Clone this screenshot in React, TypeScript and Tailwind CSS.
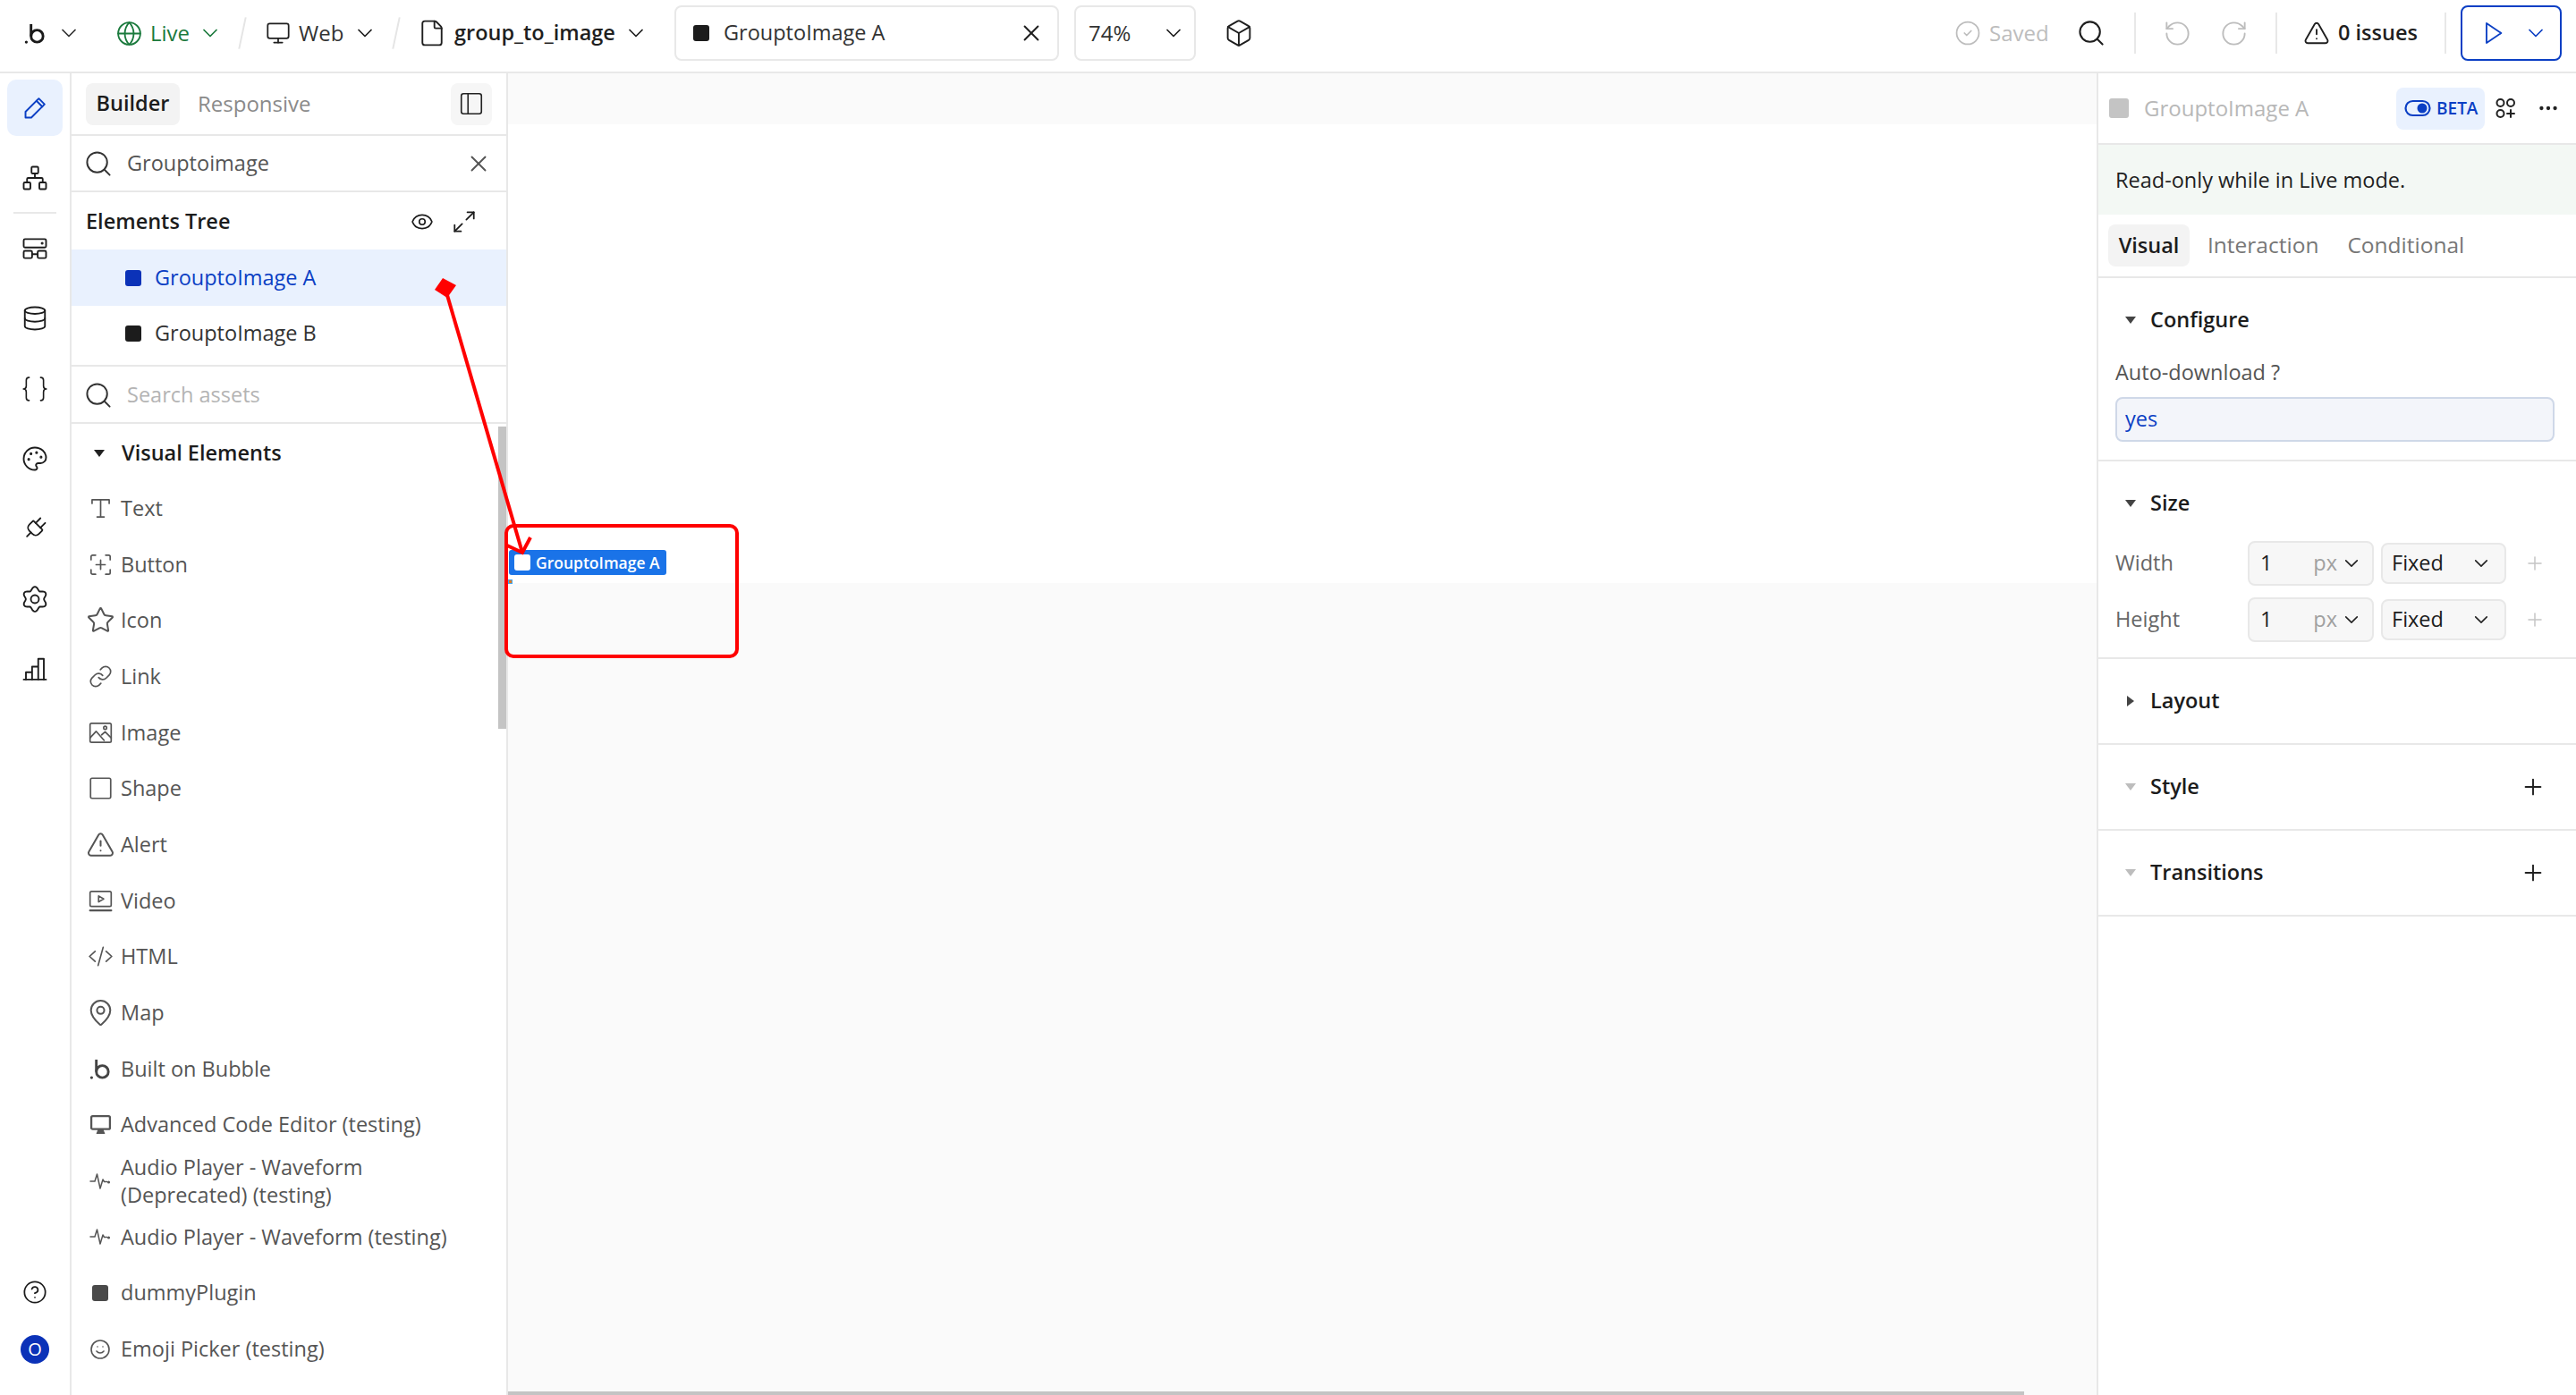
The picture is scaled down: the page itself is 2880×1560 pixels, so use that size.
import React from "react";
import { ChevronDown, Globe, Monitor, File, X, Box, Search, CircleCheck, RotateCcw, RotateCw, TriangleAlert, Eye, Maximize2, Plus, Network, Database, Palette, Plug, CircleHelp, Star, Link, MapPin, Smile, Ellipsis, PanelLeft } from "lucide-react";

type SP = { className?: string; strokeWidth?: number };
const S = (p: React.SVGProps<SVGSVGElement>) => (
  <svg viewBox="0 0 24 24" fill="none" stroke="currentColor" strokeWidth={1.5} strokeLinecap="round" strokeLinejoin="round" {...p} />
);

const BubbleLogo = ({ className }: SP) => (
  <svg viewBox="0 0 26 26" className={className} fill="none" stroke="currentColor">
    <circle cx="15" cy="16" r="7" strokeWidth="3" />
    <path d="M8 2v14" strokeWidth="3" />
    <circle cx="2.500" cy="23" r="1.700" fill="currentColor" stroke="none" />
  </svg>
);
const PencilI = ({ className }: SP) => (
  <S className={className}><path d="M3.500 20.500v-5L15 4l5 5L8.500 20.500z" /><path d="M13 6l5 5" /></S>
);
const LayoutI = ({ className }: SP) => (
  <S className={className}><rect x="2" y="3.500" width="20" height="7.500" rx="1.200" /><rect x="2" y="14" width="7.500" height="6.500" rx="1.200" /><rect x="14.500" y="14" width="7.500" height="6.500" rx="1.200" /><path d="M9.500 17h5" /><circle cx="18.500" cy="7.200" r=".5" fill="currentColor" /></S>
);
const flower = Array.from({ length: 73 }, (_, i) => {
  const t = (i / 72) * Math.PI * 2;
  const r = 9.6 + 1.5 * Math.cos(6 * t);
  return `${i ? "L" : "M"}${(12 + r * Math.sin(t)).toFixed(2)} ${(12 - r * Math.cos(t)).toFixed(2)}`;
}).join("");
const GearI = ({ className }: SP) => (
  <S className={className}><circle cx="12" cy="12" r="3.600" /><path d={flower} /></S>
);
const ChartI = ({ className }: SP) => (
  <S className={className}><path d="M2 21.500h20" /><path d="M4 21.500v-6.500h5.500v6.500M9.500 21.500V10h5.500v11.500M15 21.500V3h5v18.500" /></S>
);
const BracesI = ({ className }: SP) => (
  <S className={className} viewBox="0 0 28 28"><path d="M8 2C5.500 2 5 3 5 5v6c0 2-1 3-3 3 2 0 3 1 3 3v6c0 2 .5 3 3 3" /><path d="M20 2c2.500 0 3 1 3 3v6c0 2 1 3 3 3-2 0-3 1-3 3v6c0 2-.5 3-3 3" /></S>
);
const PlugI = ({ className, strokeWidth }: SP) => <Plug className={`${className} rotate-45`} strokeWidth={strokeWidth} />;
const ButtonI = ({ className }: SP) => (
  <S className={className}><path d="M2.500 7V4c0-.8.7-1.500 1.500-1.500h3M17 2.500h3c.8 0 1.500.7 1.500 1.500v3M21.500 17v3c0 .8-.7 1.500-1.500 1.500h-3M7 21.500H4c-.8 0-1.500-.7-1.500-1.500v-3M12 7.500v9M7.500 12h9" /></S>
);
const WaveI = ({ className }: SP) => (
  <S className={className}><path d="M1 12h5l2.500-8 3.500 16 3-10 1.500 2.500h3" /><circle cx="21.500" cy="13" r=".8" fill="currentColor" /></S>
);
const TextI = ({ className }: SP) => (
  <S className={className}><path d="M3.500 7V3.500h17V7M12 3.500v17M8.500 20.500h7" /></S>
);
const ImageI = ({ className }: SP) => (
  <S className={className}><rect x="1.500" y="2.500" width="21" height="19" rx="1.500" /><path d="M1.500 17l6-6.500 8 9M13 14l3.500-3 6 6" /><circle cx="16.500" cy="7" r="1.500" /></S>
);
const ShapeI = ({ className }: SP) => (
  <S className={className}><rect x="2" y="2" width="20" height="20" rx="1.500" /></S>
);
const VideoI = ({ className }: SP) => (
  <S className={className}><rect x="1.500" y="2.500" width="21" height="15" rx="1.500" /><path d="M10 7l5 3-5 3z" /><path d="M1.500 21.500h21" strokeWidth={2} /></S>
);
const HtmlI = ({ className }: SP) => (
  <S className={className}><path d="M6.500 7L1 12l5.500 5M17.500 7L23 12l-5.500 5M14.500 3l-5 18" /></S>
);
const MonitorFilledI = ({ className }: SP) => (
  <svg viewBox="0 0 24 24" className={className} fill="none" stroke="currentColor" strokeWidth={2.200}><rect x="2" y="3" width="20" height="14" rx="1.500" /><path d="M8 21.500l1.500-4h5l1.500 4z" fill="currentColor" strokeWidth={1} /></svg>
);
const ToggleI = ({ className }: SP) => (
  <svg viewBox="0 0 30 20" className={className} fill="none" stroke="currentColor" strokeWidth="2.200"><rect x="1.500" y="2" width="27" height="16" rx="8" /><circle cx="20" cy="10" r="5.500" fill="currentColor" stroke="none" /></svg>
);
const WidgetsI = ({ className }: SP) => (
  <S className={className} strokeWidth={2}><circle cx="6.500" cy="6" r="4" /><circle cx="18" cy="6" r="4" /><circle cx="6.500" cy="18" r="4" /><path d="M18 14v8M14 18h8" /></S>
);
const PlayI = ({ className }: SP) => (
  <S className={className} strokeWidth={1.600}><path d="M6 2.500L20 12 6 21.500z" /></S>
);
const Slash = () => <span className="h-[36px] w-[2px] bg-[#e5e5e5] rotate-[12deg]" />;
const Divider = () => <span className="h-[46px] w-[2px] bg-[#e8e8e8]" />;
const Chev = ({ className }: SP) => <ChevronDown className={`${className} scale-[1.4]`} strokeWidth={1.500} />;
const Tri = ({ c = "border-t-[#444]" }: { c?: string }) => (
  <span className={`w-0 h-0 border-l-[6px] border-r-[6px] border-t-[8px] border-l-transparent border-r-transparent ${c}`} />
);
const TriR = () => <span className="w-0 h-0 border-t-[6px] border-b-[6px] border-l-[8px] border-t-transparent border-b-transparent border-l-[#444]" />;

const TopBar = () => (
  <header className="h-[82px] shrink-0 flex items-center border-b-2 border-[#e8e8e8] pb-[6px] bg-white text-[24px] text-[#1f1f1f]">
    <BubbleLogo className="ml-[27px] w-[25px] h-[25px] text-[#1a1a1a]" />
    <Chev className="ml-[15px] w-[20px] h-[20px] text-[#333]" />
    <Globe className="ml-[44px] w-[27px] h-[27px] text-[#1b7a3d] scale-[1.1]" strokeWidth={1.500} />
    <span className="ml-[10px] w-[44px] text-[#1b7a3d]">Live</span>
    <Chev className="ml-[13px] w-[20px] h-[20px] text-[#1b7a3d]" />
    <span className="ml-[25px] flex"><Slash /></span>
    <Monitor className="ml-[26px] w-[26px] h-[26px] scale-[1.08]" strokeWidth={1.500} />
    <span className="ml-[10px] w-[52px] text-[#333]">Web</span>
    <Chev className="ml-[12px] w-[20px] h-[20px]" />
    <span className="ml-[24px] flex"><Slash /></span>
    <File className="ml-[25px] w-[28px] h-[28px] scale-[1.15]" strokeWidth={1.400} />
    <span className="ml-[11px] w-[182px] font-semibold text-[23.500px] whitespace-nowrap">group_to_image</span>
    <Chev className="ml-[11px] w-[20px] h-[20px]" />
    <div className="ml-[33px] w-[430px] h-[62px] rounded-[8px] border-2 border-[#e8e8e8] flex items-center pl-[19px] pr-[18px]">
      <span className="w-[18px] h-[18px] rounded-[3px] bg-[#1c1c1c]" />
      <span className="ml-[16px] flex-1 text-[#333] text-[23.500px]">GrouptoImage A</span>
      <X className="w-[22px] h-[22px] scale-[1.35]" strokeWidth={1.600} />
    </div>
    <div className="ml-[17px] w-[136px] h-[62px] rounded-[8px] border-2 border-[#e8e8e8] flex items-center pl-[14px] pr-[13px]">
      <span className="flex-1 text-[#333]">74%</span>
      <Chev className="w-[20px] h-[20px]" />
    </div>
    <Box className="ml-[33px] w-[30px] h-[30px] scale-[1.1]" strokeWidth={1.400} />
    <div className="flex-1" />
    <CircleCheck className="w-[26px] h-[26px] text-[#bdbdbd] scale-[1.15]" strokeWidth={1.400} />
    <span className="ml-[11px] w-[68px] text-[#bdbdbd]">Saved</span>
    <Search className="ml-[32px] w-[28px] h-[28px] scale-[1.2]" strokeWidth={1.500} />
    <span className="ml-[34px] flex"><Divider /></span>
    <RotateCcw className="ml-[33px] w-[27px] h-[27px] text-[#bdbdbd] scale-[1.2]" strokeWidth={1.400} />
    <RotateCw className="ml-[36px] w-[27px] h-[27px] text-[#bdbdbd] scale-[1.2]" strokeWidth={1.400} />
    <span className="ml-[33px] flex"><Divider /></span>
    <TriangleAlert className="ml-[29px] w-[30px] h-[30px]" strokeWidth={1.500} />
    <span className="ml-[9px] w-[90px] font-semibold text-[23.500px] whitespace-nowrap">0 issues</span>
    <span className="ml-[29px] flex"><Divider /></span>
    <div className="ml-[16px] mr-[16px] w-[113px] h-[62px] rounded-[8px] border-2 border-[#0b3fc4] flex items-center pl-[20px] text-[#0b3fc4]">
      <PlayI className="w-[28px] h-[28px]" />
      <Chev className="ml-[24px] w-[20px] h-[20px]" />
    </div>
  </header>
);

const railIcons: React.ComponentType<SP>[] = [LayoutI, Database, BracesI, Palette, PlugI, GearI, ChartI];
const Rail = () => (
  <aside className="w-[80px] shrink-0 border-r-2 border-[#e8e8e8] flex flex-col items-center bg-white text-[#1c1c1c]">
    <div className="mt-[7px] w-[62px] h-[63px] rounded-[10px] bg-[#e9f1fe] flex items-center justify-center">
      <PencilI className="w-[31px] h-[31px] text-[#0b3fc4]" />
    </div>
    <div className="mt-[16px] h-[62px] flex items-center"><Network className="w-[30px] h-[30px]" strokeWidth={1.500} /></div>
    <div className="mt-[7px] w-[48px] h-[2px] bg-[#e8e8e8]" />
    {railIcons.map((I, i) => (
      <div key={i} className="h-[78.300px] flex items-center justify-center"><I className="w-[30px] h-[30px]" strokeWidth={1.500} /></div>
    ))}
    <div className="flex-1" />
    <CircleHelp className="w-[28px] h-[28px] mb-[34px]" strokeWidth={1.500} />
    <div className="w-[32px] h-[32px] rounded-full bg-[#0b32b8] text-white text-[20px] flex items-center justify-center mb-[35px]">O</div>
  </aside>
);

const items: [React.ComponentType<SP>, string, string][] = [
  [TextI, "Text", ""], [ButtonI, "Button", ""], [Star, "Icon", "scale-[1.2]"], [Link, "Link", ""], [ImageI, "Image", ""], [ShapeI, "Shape", ""], [TriangleAlert, "Alert", "scale-[1.2]"], [VideoI, "Video", ""], [HtmlI, "HTML", ""], [MapPin, "Map", "scale-[1.2]"],
];

const Item = ({ icon, label, h = "h-[62.700px]" }: { icon: React.ReactNode; label: React.ReactNode; h?: string }) => (
  <div className={`${h} flex items-center shrink-0 text-[#555]`}>
    <span className="ml-[17px] w-[30px] flex justify-center">{icon}</span>
    <span className="ml-[8px] text-[23.500px] leading-[31px]">{label}</span>
  </div>
);

const LeftPanel = () => (
  <aside className="relative w-[488px] shrink-0 border-r-2 border-[#e8e8e8] bg-white flex flex-col overflow-hidden text-[23.500px]">
    <div className="h-[70px] shrink-0 border-b-2 border-[#e8e8e8] flex items-center pl-[16px]">
      <span className="w-[105px] h-[47px] rounded-[8px] bg-[#f3f3f3] flex items-center justify-center font-semibold text-[#1c1c1c]">Builder</span>
      <span className="ml-[20px] text-[#8a8a8a] text-[24px]">Responsive</span>
      <div className="flex-1" />
      <span className="mr-[16px] w-[46px] h-[47px] rounded-[8px] bg-[#f6f6f6] flex items-center justify-center">
        <PanelLeft className="w-[30px] h-[30px] text-[#222]" strokeWidth={1.300} />
      </span>
    </div>
    <div className="h-[63px] shrink-0 border-b-2 border-[#e8e8e8] pt-[1px] flex items-center pl-[16px] pr-[19px] text-[#555]">
      <Search className="w-[28px] h-[28px] text-[#333] scale-[1.2]" strokeWidth={1.400} />
      <span className="ml-[18px] flex-1">Grouptoimage</span>
      <X className="w-[24px] h-[24px] text-[#555] scale-[1.25]" strokeWidth={1.500} />
    </div>
    <div className="h-[64px] shrink-0 pt-[2px] flex items-center pl-[16px] pr-[34px] font-semibold text-[#1c1c1c]">
      <span className="flex-1">Elements Tree</span>
      <Eye className="w-[26px] h-[26px]" strokeWidth={1.500} />
      <Maximize2 className="ml-[21px] w-[26px] h-[26px] scale-[1.1]" strokeWidth={1.500} />
    </div>
    <div className="h-[63px] shrink-0 bg-[#e9f1fe] flex items-center pl-[60px] text-[#0b3fc4]">
      <span className="w-[18px] h-[18px] rounded-[3px] bg-[#0b32b8]" />
      <span className="ml-[15px]">GrouptoImage A</span>
    </div>
    <div className="h-[68px] shrink-0 border-b-2 border-[#e8e8e8] pb-[5px] flex items-center pl-[60px] text-[#333]">
      <span className="w-[18px] h-[18px] rounded-[3px] bg-[#1c1c1c]" />
      <span className="ml-[15px]">GrouptoImage B</span>
    </div>
    <div className="h-[64px] shrink-0 border-b-2 border-[#e8e8e8] pt-[1px] flex items-center pl-[16px] text-[#b4b4b4]">
      <Search className="w-[28px] h-[28px] text-[#333] scale-[1.2]" strokeWidth={1.400} />
      <span className="ml-[18px]">Search assets</span>
    </div>
    <div className="flex flex-col">
      <div className="h-[63px] shrink-0 pt-[3px] flex items-center pl-[25px] font-semibold text-[#1c1c1c]">
        <Tri c="border-t-[#222]" />
        <span className="ml-[19px]">Visual Elements</span>
      </div>
      {items.map(([I, l, c]) => (
        <Item key={l} icon={<I className={`w-[27px] h-[27px] ${c}`} strokeWidth={1.500} />} label={l} />
      ))}
      <Item icon={<BubbleLogo className="w-[25px] h-[25px] text-[#444]" />} label="Built on Bubble" />
      <Item icon={<MonitorFilledI className="w-[25px] h-[25px]" />} label="Advanced Code Editor (testing)" />
      <Item icon={<WaveI className="w-[24px] h-[24px]" />} label={<>Audio Player - Waveform<br />(Deprecated) (testing)</>} />
      <Item icon={<WaveI className="w-[24px] h-[24px]" />} label="Audio Player - Waveform (testing)" />
      <Item icon={<span className="w-[18px] h-[18px] rounded-[3px] bg-[#4a4a4a]" />} label="dummyPlugin" />
      <Item icon={<Smile className="w-[24px] h-[24px]" strokeWidth={1.600} />} label="Emoji Picker (testing)" />
    </div>
    <div className="absolute right-0 top-[395px] w-[9px] h-[338px] bg-[#c4c4c4]" />
  </aside>
);

const Canvas = () => (
  <main className="relative flex-1 min-w-0 flex flex-col bg-white">
    <div className="h-[57px] bg-[#fafafa]" />
    <div className="h-[513px] bg-white" />
    <div className="flex-1 bg-[#fafafa]" />
    <div className="absolute left-[1px] top-[533px] w-[176px] h-[28px] rounded-[3px] bg-[#1a73e8] flex items-center pl-[6px] text-white text-[17.500px] font-semibold whitespace-nowrap">
      <span className="w-[18px] h-[18px] rounded-[3px] bg-white" />
      <span className="ml-[6px]">GrouptoImage A</span>
    </div>
    <div className="absolute left-[0px] top-[566px] w-[5px] h-[5px] bg-[#e07b1a] border border-[#42a5f5]" />
    <div className="absolute left-0 bottom-0 w-[1695px] h-[4px] bg-[#c4c4c4]" />
  </main>
);

const SectionHead = ({ title, tri, plus }: { title: string; tri: React.ReactNode; plus?: boolean }) => (
  <div className="h-[96px] border-b-2 border-[#e8e8e8] flex items-center pl-[29px] pr-[36px]">
    <span className="w-[14px] flex justify-center">{tri}</span>
    <span className="ml-[15px] flex-1 font-semibold text-[#1c1c1c]">{title}</span>
    {plus && <Plus className="w-[24px] h-[24px] text-[#222] scale-[1.2]" strokeWidth={1.600} />}
  </div>
);

const SizeRow = ({ label }: { label: string }) => (
  <div className="h-[63px] flex items-center pl-[19px]">
    <span className="w-[148px] text-[#666]">{label}</span>
    <div className="w-[141px] h-[50px] rounded-[8px] border-2 border-[#e8e8e8] bg-[#f7f7f7] flex items-center pl-[12px] pr-[14px]">
      <span className="flex-1 text-[#1c1c1c]">1</span>
      <span className="text-[#a0a0a0]">px</span>
      <Chev className="ml-[7px] w-[18px] h-[18px] text-[#222]" />
    </div>
    <div className="ml-[8px] w-[140px] h-[46px] rounded-[8px] border-2 border-[#e8e8e8] bg-[#f7f7f7] flex items-center pl-[10px] pr-[17px]">
      <span className="flex-1 text-[#1c1c1c]">Fixed</span>
      <Chev className="w-[18px] h-[18px] text-[#222]" />
    </div>
    <Plus className="ml-[20px] w-[24px] h-[24px] text-[#c4c4c4]" strokeWidth={1.500} />
  </div>
);

const RightPanel = () => (
  <aside className="w-[536px] shrink-0 border-l-2 border-[#e8e8e8] bg-white flex flex-col text-[23.500px]">
    <div className="h-[80px] shrink-0 border-b-2 border-[#e8e8e8] flex items-center pl-[12px]">
      <span className="w-[22px] h-[22px] rounded-[3px] bg-[#c4c4c4]" />
      <span className="ml-[17px] flex-1 font-medium text-[#b8b8b8] text-[24px]">GrouptoImage A</span>
      <span className="w-[99px] h-[47px] rounded-[8px] bg-[#e9f1fe] flex items-center pl-[9px] text-[#0b3fc4] text-[19px] font-semibold">
        <ToggleI className="w-[30px] h-[20px]" />
        <span className="ml-[6px]">BETA</span>
      </span>
      <WidgetsI className="ml-[11px] w-[24px] h-[24px] text-[#222]" />
      <Ellipsis className="ml-[23px] mr-[18px] w-[26px] h-[26px] text-[#222]" strokeWidth={2} />
    </div>
    <div className="h-[78px] shrink-0 bg-[#f3f8f4] pt-[1px] flex items-center pl-[19px] text-[#1f1f1f]">Read-only while in Live mode.</div>
    <div className="h-[71px] shrink-0 border-b-2 border-[#e8e8e8] flex items-center pl-[11px]">
      <span className="w-[91px] h-[47px] rounded-[8px] bg-[#f3f3f3] flex items-center justify-center font-semibold text-[#1c1c1c]">Visual</span>
      <span className="ml-[20px] text-[#777] font-medium text-[24.500px]">Interaction</span>
      <span className="ml-[32px] text-[#777] font-medium text-[24.500px]">Conditional</span>
    </div>
    <div className="h-[205px] shrink-0 border-b-2 border-[#e8e8e8] flex flex-col">
      <div className="h-[94px] shrink-0 flex items-center pl-[29px]">
        <span className="w-[14px] flex justify-center"><Tri /></span>
        <span className="ml-[15px] font-semibold text-[#1c1c1c]">Configure</span>
      </div>
      <span className="ml-[19px] mt-[-5px] text-[#555] leading-[32px]">Auto-download ?</span>
      <div className="ml-[19px] mt-[12px] w-[491px] h-[50px] rounded-[8px] border-2 border-[#cfd8e8] bg-[#f3f5fa] flex items-center pl-[9px] text-[#0b3fc4]">yes</div>
    </div>
    <div className="h-[221px] shrink-0 border-b-2 border-[#e8e8e8] flex flex-col">
      <div className="h-[82px] shrink-0 flex items-center pl-[29px] pt-[11px]">
        <span className="w-[14px] flex justify-center"><Tri /></span>
        <span className="ml-[15px] font-semibold text-[#1c1c1c]">Size</span>
      </div>
      <SizeRow label="Width" />
      <SizeRow label="Height" />
    </div>
    <SectionHead title="Layout" tri={<TriR />} />
    <SectionHead title="Style" tri={<Tri c="border-t-[#bdbdbd]" />} plus />
    <SectionHead title="Transitions" tri={<Tri c="border-t-[#bdbdbd]" />} plus />
  </aside>
);

const Annotation = () => (
  <svg className="absolute left-0 top-0 pointer-events-none" width="2880" height="1560" viewBox="0 0 2880 1560" fill="none">
    <rect x="566" y="588" width="258" height="146" rx="8" stroke="#ff0000" strokeWidth="4" />
    <path d="M500 330L584 618" stroke="#ff0000" strokeWidth="4" />
    <path d="M593 601L584 618L567 610" stroke="#ff0000" strokeWidth="4" />
    <path d="M495 311L510 319L500 333L486 324Z" fill="#ff0000" />
  </svg>
);

export default function App() {
  return (
    <div className="relative w-[2880px] h-[1560px] overflow-hidden bg-white font-['Open_Sans',sans-serif] flex flex-col">
      <TopBar />
      <div className="flex-1 min-h-0 flex">
        <Rail />
        <LeftPanel />
        <Canvas />
        <RightPanel />
      </div>
      <Annotation />
    </div>
  );
}
